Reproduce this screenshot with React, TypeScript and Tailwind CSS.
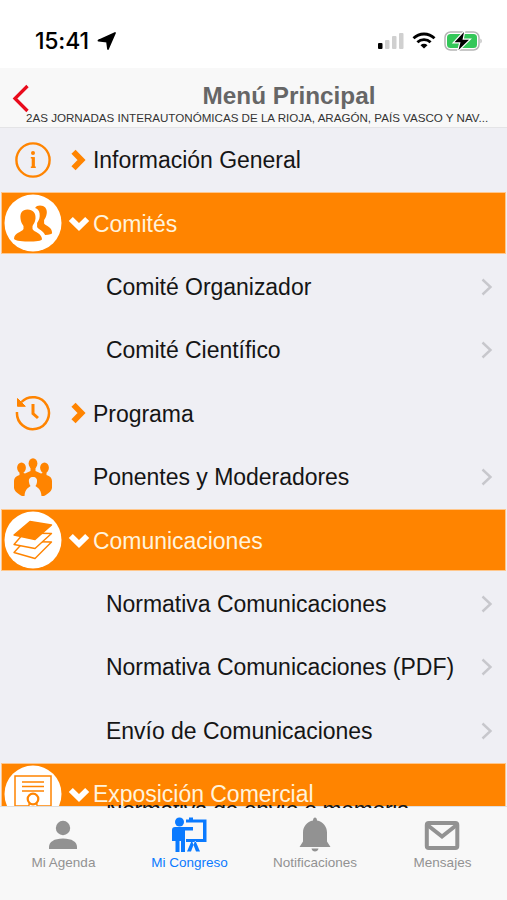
import React from "react";

const ORANGE = "#ff8400";

function InfoIcon() {
  return (
    <svg width="38" height="38" viewBox="0 0 38 38" fill="none" stroke={ORANGE}>
      <circle cx="19" cy="19" r="16.6" strokeWidth="2.4" />
      <circle cx="19" cy="12" r="2" fill={ORANGE} stroke="none" />
      <path d="M16.800 16.800h2.500M16.800 26.300h5" strokeWidth="1.400" />
      <path d="M19.300 16.100V27" strokeWidth="3.200" />
    </svg>
  );
}

function PeopleIcon() {
  return (
    <svg width="58" height="58" viewBox="0 0 58 58">
      <circle cx="29" cy="29" r="28.5" fill="#fff" />
      <g fill={ORANGE}>
        <path d="M36 11.500c4.500 0 7.300 3 6.800 7.500-.3 3.500-1.700 5.500-2.700 7v3.500c2 2.500 8 3.500 8 9.500 0 1-2.500 1.800-7 2-2-4.500-6.500-5.500-8-8V29c2-3 3-5.500 2.500-9.500-.4-3-1.900-4.500-4.500-5.500.8-1.700 2.700-2.500 4.900-2.500z" />
        <path d="M23.500 15.500c5.500 0 8.500 3.500 8 9-.3 3.500-2 5.800-3 7.500V35c2 3.500 9 4 9.500 10 0 2-6 2.500-14 2.500S10 46.500 10 44.500c.5-6 7.500-6 9.500-9.500v-3c-1.200-1.700-2.700-4-3-7.500-.5-5.500 1.500-9 7-9z" />
      </g>
    </svg>
  );
}

function HistoryIcon() {
  return (
    <svg width="38" height="38" viewBox="0 0 38 38" fill="none" stroke={ORANGE} strokeWidth="2.500">
      <path d="M3 18a16 16 0 1 0 4.500-10" />
      <path d="M3.500 4.500v7.800h7.800z" fill={ORANGE} strokeWidth="1" />
      <path d="M19 10v9.500l5 4.500" strokeWidth="3" />
    </svg>
  );
}

function AudienceIcon() {
  return (
    <svg width="40" height="38" viewBox="0 0 40 38">
      <g fill={ORANGE}>
        <ellipse cx="20" cy="5.500" rx="4.400" ry="5.200" />
        <ellipse cx="8.500" cy="9.800" rx="4.400" ry="5.200" />
        <ellipse cx="31.500" cy="9.800" rx="4.400" ry="5.200" />
        <path d="M17.500 9h5v4l5.500 2.500 1.500-.5v-2h4v4c3.500 1 5.500 3 5.500 6v6.500c0 3.500-4 6.500-8 8.500H9c-4-2-8-5-8-8.500V23c0-3 2-5 5.500-6v-4h4v2l1.500.5 5.500-2.500z" />
      </g>
      <path d="M20 19c3 0 4.500 2 4 5-.2 2-1 3-1.500 4 1 1.500 5.500 2 6 10h-17c.5-8 5-8.500 6-10-.6-1-1.300-2-1.500-4-.5-3 1-5 4-5z" fill="#efeff4" />
    </svg>
  );
}

function LayersIcon() {
  return (
    <svg width="58" height="58" viewBox="0 0 58 58" strokeLinejoin="round">
      <circle cx="29" cy="29" r="28.500" fill="#fff" />
      <g fill="#fff" stroke={ORANGE} strokeWidth="1.400">
        <path d="M10 41.500 20 30.500 47.500 31 31 47.500z" />
        <path d="M10 33.500 20 22 47.500 22.500 31 37.500z" />
        <path d="M10 24 26 10.500 47.500 14 31 28.500z" fill={ORANGE} />
      </g>
    </svg>
  );
}

function CertificateIcon() {
  return (
    <svg width="58" height="58" viewBox="0 0 58 58" fill="none" stroke={ORANGE} strokeWidth="1.500">
      <circle cx="29" cy="29" r="28.500" fill="#fff" stroke="none" />
      <path d="M24 41H11V11h36v30H34M18 17h22M18 21.500h22M18 26h22" />
      <circle cx="29" cy="34" r="5.300" strokeWidth="2.200" />
      <path d="m25.500 38-2 8 5-2 6 2-2-8" />
    </svg>
  );
}

function ExpandMark({ open }: { open: boolean }) {
  return open ? (
    <svg width="22" height="18" viewBox="0 0 22 18" fill="none">
      <path d="m2.800 5 8.200 8 8.200-8" stroke="#fff" strokeWidth="5.800" />
    </svg>
  ) : (
    <svg width="22" height="24" viewBox="0 0 22 24" fill="none">
      <path d="m5.500 3.800 8 8.200-8 8.200" stroke={ORANGE} strokeWidth="5.800" />
    </svg>
  );
}

function Disclosure() {
  return (
    <svg className="ml-auto mr-[14px] shrink-0" width="12" height="18" viewBox="0 0 12 18" fill="none">
      <path d="m1.500 1.500 8 7.500-8 7.500" stroke="#c7c7cc" strokeWidth="2.400" />
    </svg>
  );
}

type Item = { label: string; icon?: React.ReactNode; kind: "closed" | "open" | "child" | "link" };

const items: Item[] = [
  { label: "Información General", icon: <InfoIcon />, kind: "closed" },
  { label: "Comités", icon: <PeopleIcon />, kind: "open" },
  { label: "Comité Organizador", kind: "child" },
  { label: "Comité Científico", kind: "child" },
  { label: "Programa", icon: <HistoryIcon />, kind: "closed" },
  { label: "Ponentes y Moderadores", icon: <AudienceIcon />, kind: "link" },
  { label: "Comunicaciones", icon: <LayersIcon />, kind: "open" },
  { label: "Normativa Comunicaciones", kind: "child" },
  { label: "Normativa Comunicaciones (PDF)", kind: "child" },
  { label: "Envío de Comunicaciones", kind: "child" },
  { label: "Exposición Comercial", icon: <CertificateIcon />, kind: "open" },
];

function Row({ label, icon, kind }: Item) {
  if (kind === "child") {
    return (
      <div className="flex h-[63.400px] shrink-0 items-center pl-[106px] pt-px">
        <span className="whitespace-nowrap">{label}</span>
        <Disclosure />
      </div>
    );
  }
  const open = kind === "open";
  return (
    <div className={open ? "h-[63.400px] shrink-0 px-px py-[1px]" : "h-[63.400px] shrink-0 py-[1px] pl-px"}>
      <div className={open ? "flex h-full items-center border border-[#ffc78c] bg-[#ff8400] text-[#fff3dc]" : "flex h-full items-center border-l border-transparent"}>
        <div className="flex w-[62px] shrink-0 items-center justify-center">{icon}</div>
        <div className="flex w-[29px] shrink-0 items-center pl-[4px]">{kind !== "link" && <ExpandMark open={open} />}</div>
        <span className="whitespace-nowrap pt-px">{label}</span>
        {kind === "link" && <Disclosure />}
      </div>
    </div>
  );
}

function StatusBar() {
  return (
    <div className="flex h-[68px] shrink-0 items-center bg-white pl-[35px] pr-[25px] pt-[14px]">
      <span className="w-[59px] font-[Inter,sans-serif] text-[23px] font-medium tracking-[-0.200px] text-black">15:41</span>
      <svg className="ml-[3px]" width="20" height="20" viewBox="0 0 20 20">
        <path d="M18 2 11 18 10 10.500 1.500 9.500z" stroke="#000" strokeWidth="1.800" strokeLinejoin="round" />
      </svg>
      <div className="ml-auto flex items-center">
        <svg width="28" height="18" viewBox="0 0 28 18">
          <rect x="1" y="11" width="4.500" height="6" rx="1" />
          <g fill="#d0d0d0">
            <rect x="8" y="8" width="4.500" height="9" rx="1" />
            <rect x="15" y="4" width="4.500" height="13" rx="1" />
            <rect x="22" y="1" width="4.500" height="16" rx="1" />
          </g>
        </svg>
        <svg className="ml-[7px]" width="24" height="18" viewBox="0 0 24 18" fill="none" stroke="#000" strokeWidth="2.800">
          <path d="M1.500 6.300a15 15 0 0 1 21 0M5.400 10.300a9.500 9.500 0 0 1 13.200 0" />
          <path d="m12 16.500-3.500-3.300a5 5 0 0 1 7 0z" fill="#000" stroke="none" />
        </svg>
        <svg className="ml-[8px]" width="38" height="20" viewBox="0 0 38 20">
          <rect x="1" y="1" width="34" height="18" rx="5.500" fill="#fff" stroke="#b5b5b5" strokeWidth="1.500" />
          <rect x="3" y="3" width="30" height="14" rx="3.500" fill="#34c759" />
          <path d="M36.500 7.500c1.500.8 1.500 4.200 0 5z" fill="#aaa" />
          <path d="M20 1 10.500 11.300h6L14.500 19 25 8.700h-6.500z" fill="#000" stroke="#fff" strokeWidth="2.400" paintOrder="stroke" />
        </svg>
      </div>
    </div>
  );
}

function AgendaIcon() {
  return (
    <svg className="-ml-[1px]" width="30" height="30" viewBox="0 0 30 30" fill="#929292">
      <circle cx="15" cy="8" r="7.200" />
      <path d="M1 29v-2c0-5 5-8.500 14-8.500S29 22 29 27v2z" />
    </svg>
  );
}

function CongressIcon() {
  return (
    <svg className="-ml-[2px]" width="36" height="36" viewBox="0 0 36 36" fill="#0a7aff">
      <circle cx="8.500" cy="5" r="4.500" />
      <path d="M4 10h18v3.500h-8V35h-4V24H8.500v11h-4V24H1V13c0-2 1-3 3-3z" />
      <path d="M15 2.500h20.500V25H15v-3h17V5.500H15zM18 .5h4V4h-4zM20.500 24h3.500L20 34.500h-4zM24.500 24H21l4 10.500h4z" />
    </svg>
  );
}

function BellIcon() {
  return (
    <svg className="-ml-[1px]" width="32" height="36" viewBox="0 0 32 36" fill="#929292">
      <path d="M14 3.500c0-4 4-4 4 0 6 1.200 10 6 10 12v9l3.500 5.500H.5L4 24.500v-9c0-6 4-10.800 10-12zM12.500 31.500h7c-.5 4-6.500 4-7 0z" />
    </svg>
  );
}

function MailIcon() {
  return (
    <svg className="-ml-[1px]" width="36" height="30" viewBox="0 0 36 30" fill="none" stroke="#929292" strokeWidth="4">
      <rect x="2.800" y="3" width="30.500" height="25" rx="2" />
      <path d="M4 5.500 18 16.500 32 5.500" strokeWidth="4" />
    </svg>
  );
}

function Tab({ label, icon, width, active = false }: { label: string; icon: React.ReactNode; width: string; active?: boolean }) {
  return (
    <div className={`flex flex-col items-center ${width} ${active ? "text-[#0a7aff]" : "text-[#929292]"}`}>
      <div className="flex h-[36px] items-center">{icon}</div>
      <span className="mt-[2px] text-[13.500px] leading-[16px]">{label}</span>
    </div>
  );
}

export default function App() {
  return (
    <div className="flex h-[900px] w-[507px] flex-col overflow-hidden bg-[#efeff4] font-['Liberation_Sans',Arial,sans-serif]">
      <StatusBar />
      <header className="flex h-[60px] shrink-0 items-start border-b border-[#e4e4e6] bg-[#f8f8f8]">
        <svg className="ml-[12px] mt-[16px] shrink-0" width="18" height="29" viewBox="0 0 18 29" fill="none">
          <path d="M15.500 2 3 14.500 15.500 27" stroke="#e90b1c" strokeWidth="3.300" />
        </svg>
        <div className="-ml-[4px] mt-[13px] flex w-[463px] flex-col">
          <h1 className="ml-[63px] text-center text-[24.300px] font-bold leading-[29px] text-[#666]">Menú Principal</h1>
          <p className="whitespace-nowrap text-[11.600px] leading-[16px] text-[#333]">2AS JORNADAS INTERAUTONÓMICAS DE LA RIOJA, ARAGÓN, PAÍS VASCO Y NAV...</p>
        </div>
      </header>
      <main className="flex h-[678px] shrink-0 flex-col overflow-hidden text-[23px] leading-[28px] tracking-[-0.030px] text-[#151515]">
        {items.map((item) => (
          <Row key={item.label} {...item} />
        ))}
      </main>
      <nav className="relative flex h-[94px] shrink-0 border-t border-[#dedede] bg-[#f8f8f8] pt-[10px]">
        <div className="absolute -top-[2px] left-[106px] h-[3px] w-[310px] overflow-hidden">
          <span className="-mt-[9px] block whitespace-nowrap text-[23px] leading-[28px] tracking-[-0.400px] text-[#151515]">Normativa de envío o memoria</span>
        </div>
        <Tab label="Mi Agenda" icon={<AgendaIcon />} width="w-[127px]" />
        <Tab label="Mi Congreso" icon={<CongressIcon />} width="w-[125px]" active />
        <Tab label="Notificaciones" icon={<BellIcon />} width="w-[126px]" />
        <Tab label="Mensajes" icon={<MailIcon />} width="w-[129px]" />
      </nav>
    </div>
  );
}
